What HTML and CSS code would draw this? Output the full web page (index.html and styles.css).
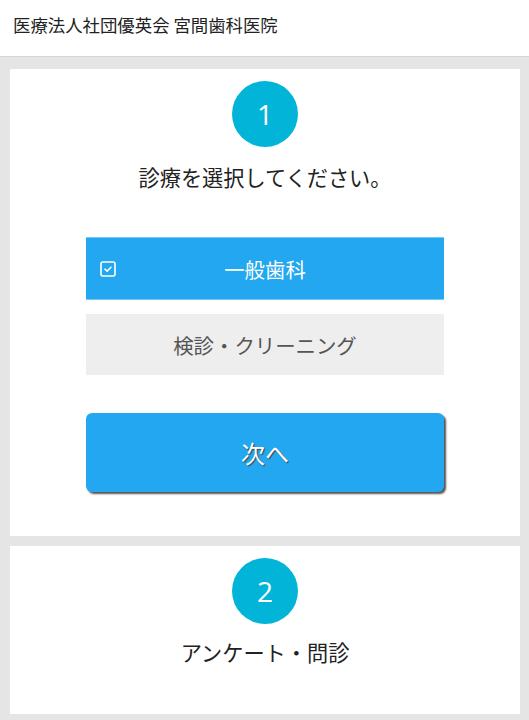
FILE: index.html
```html
<!DOCTYPE html>
<html lang="ja">
<head>
    <meta charset="UTF-8">
    <meta name="viewport" content="width=device-width, initial-scale=1.0">
    <title>宮間歯科医院 Web予約</title>
    <link rel="stylesheet" href="styles.css">
</head>
<body>
<header class="site-header">医療法人社団優英会 宮間歯科医院</header>
<main class="steps">
    <section class="step">
        <div class="step-num">1</div>
        <h2 class="step-title">診療を選択してください。</h2>
        <div class="options">
            <button class="option selected">
                <svg class="check" width="16" height="16" viewBox="0 0 16 16">
                    <rect x="1" y="1" width="14" height="14" rx="2" fill="none" stroke="#fff" stroke-width="1.6"/>
                    <path d="M5 8.2 L7.1 10.2 L11 6.2" fill="none" stroke="#fff" stroke-width="1.6" stroke-linecap="round" stroke-linejoin="round"/>
                </svg>
                一般歯科
            </button>
            <button class="option">検診・クリーニング</button>
        </div>
        <button class="next">次へ</button>
    </section>
    <section class="step step-last">
        <div class="step-num">2</div>
        <h2 class="step-title small-gap">アンケート・問診</h2>
    </section>
</main>
</body>
</html>
```

FILE: styles.css
```css
body {
    margin: 0;
    background-color: #e5e5e5;
    font-family: "Noto Sans CJK JP", "Noto Sans", sans-serif;
    color: #222;
}

.site-header {
    background-color: #fff;
    height: 56px;
    line-height: 50px;
    padding: 0 13px;
    font-size: 17.4px;
    border-bottom: 1px solid #d6d6d6;
}

.steps {
    padding: 12px 9px 10px 10px;
    display: flex;
    flex-direction: column;
    gap: 10px;
}

.step {
    background-color: #fff;
    padding: 12px 0 44px;
    display: flex;
    flex-direction: column;
    align-items: center;
}

.step-last {
    padding-bottom: 47px;
}

.step-num {
    width: 66px;
    height: 66px;
    border-radius: 50%;
    background-color: #02b4d7;
    color: #fff;
    font-family: "Open Sans", sans-serif;
    font-size: 28px;
    line-height: 66px;
    text-align: center;
}

.step-title {
    margin: 15px 0 0;
    font-size: 21.2px;
    font-weight: normal;
    line-height: 30px;
    color: #222;
}

.step-title.small-gap {
    margin-top: 13px;
}

.options {
    margin-top: 45px;
    width: 358px;
    display: flex;
    flex-direction: column;
    gap: 14px;
}

.option {
    position: relative;
    height: 61px;
    border: none;
    background-color: #eeeeee;
    color: #555;
    font-family: inherit;
    font-size: 20.4px;
    cursor: pointer;
}

.option.selected {
    height: 63px;
    background-color: #22a7f0;
    border-top: 1px solid #74c8f5;
    border-bottom: 1px solid #74c8f5;
    color: #fff;
}

.check {
    position: absolute;
    left: 14px;
    top: 23px;
}

.next {
    margin-top: 38px;
    width: 358px;
    height: 79px;
    border: none;
    border-radius: 6px;
    background-color: #22a7f0;
    box-shadow: 2px 2px 2px #555;
    color: #fff;
    font-family: inherit;
    font-size: 24px;
    text-shadow: 1px 1px 1px #444;
    cursor: pointer;
}
```
